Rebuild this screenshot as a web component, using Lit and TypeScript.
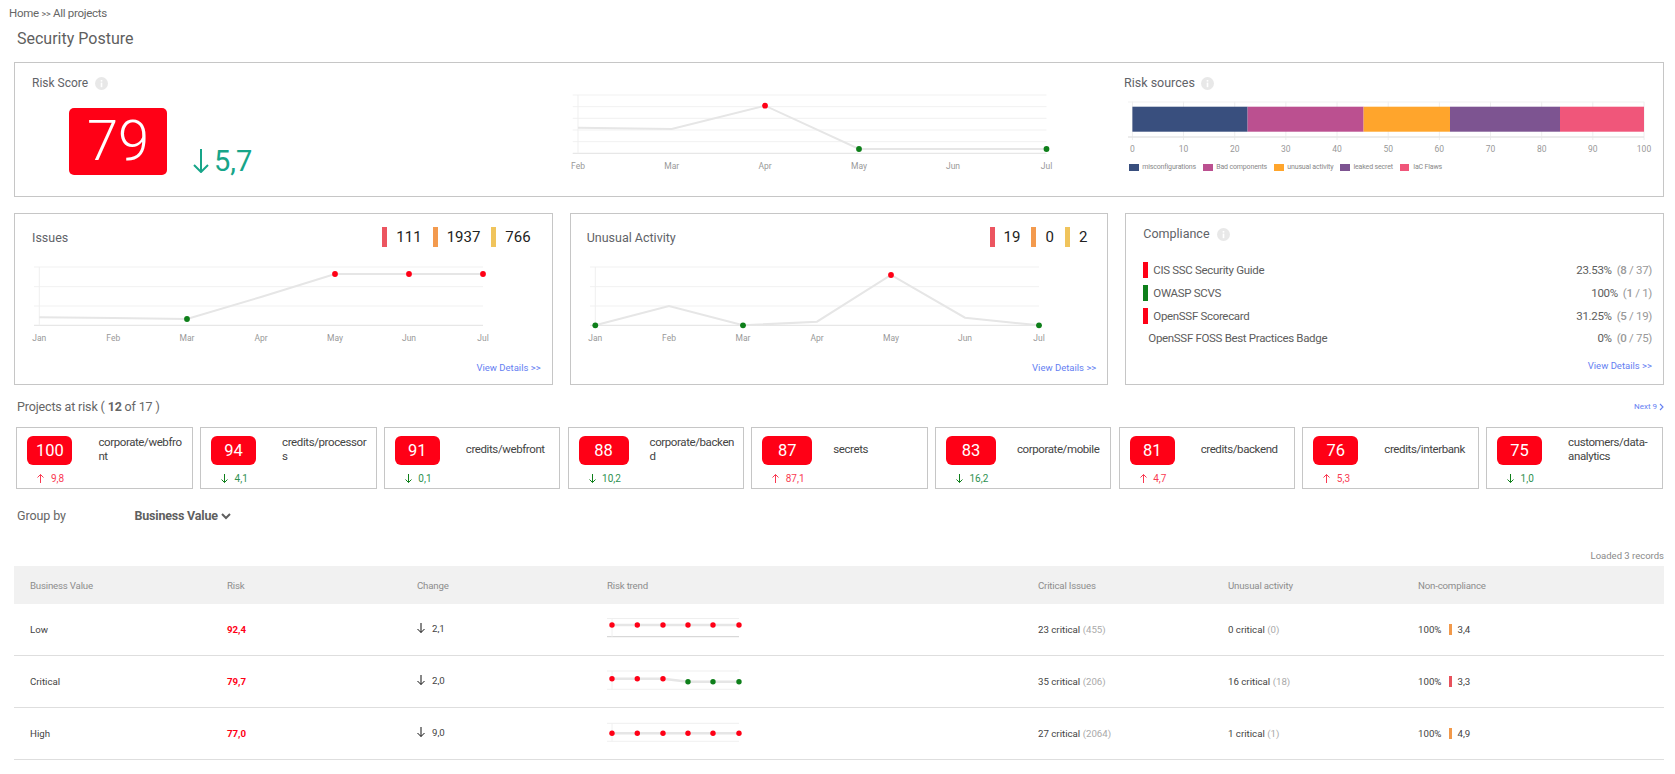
import { LitElement, html, css, svg } from "lit";
import { customElement } from "lit/decorators.js";

const RED = "#ff0016";
const GREEN = "#0e7f1a";

type Pt = [number, number, string?];

function lineChart(o: {
  w: number; h: number; gridL: number; gridR: number; axisX: number; grid: number[];
  pts: Pt[]; labels: string[]; labelY: number; fs: number;
}) {
  const last = o.grid[o.grid.length - 1];
  const poly = o.pts.map((p) => `${p[0]},${p[1]}`).join(" ");
  return html`<svg class="chart" width=${o.w} height=${o.h} viewBox="0 0 ${o.w} ${o.h}">
    ${o.grid.map((y, i) => svg`<line x1=${o.gridL} x2=${o.gridR} y1=${y} y2=${y} stroke=${i === o.grid.length - 1 ? "#e2e2e2" : "#f1f1f1"} stroke-width="1"></line>`)}
    <line x1=${o.axisX} x2=${o.axisX} y1=${o.grid[0]} y2=${last} stroke="#efefef" stroke-width="1"></line>
    <polyline points=${poly} fill="none" stroke="#e6e6e6" stroke-width="2"></polyline>
    ${o.pts.filter((p) => p[2]).map((p) => svg`<circle cx=${p[0]} cy=${p[1]} r="2.9" fill=${p[2]!}></circle>`)}
    ${o.labels.map((l, i) => svg`<text x=${o.pts[i][0]} y=${o.labelY} text-anchor="middle" font-size=${o.fs} fill="#999" font-family="Roboto, sans-serif">${l}</text>`)}
  </svg>`;
}

function arrow(dir: "up" | "down", w: number, h: number, color: string, sw: number) {
  const m = w / 2;
  const head = w / 2 - sw / 2;
  const d = dir === "down"
    ? `M${m} 0V${h - sw / 2}M${m - head} ${h - head - sw / 2}L${m} ${h - sw / 2}L${m + head} ${h - head - sw / 2}`
    : `M${m} ${h}V${sw / 2}M${m - head} ${head + sw / 2}L${m} ${sw / 2}L${m + head} ${head + sw / 2}`;
  return html`<svg class="arrow" width=${w} height=${h} viewBox="0 0 ${w} ${h}"><path d=${d} fill="none" stroke=${color} stroke-width=${sw}></path></svg>`;
}

const info = html`<svg class="info" width="13" height="13" viewBox="0 0 13 13"><circle cx="6.5" cy="6.5" r="6.5" fill="#e8e8e8"></circle><rect x="5.7" y="5.6" width="1.6" height="4.6" fill="#fff"></rect><rect x="5.7" y="3" width="1.6" height="1.6" fill="#fff"></rect></svg>`;

const projects = [
  { s: 100, n: "corporate/webfront", d: "up", v: "9,8", wide: false },
  { s: 94, n: "credits/processors", d: "down", v: "4,1", wide: false },
  { s: 91, n: "credits/webfront", d: "down", v: "0,1", wide: false },
  { s: 88, n: "corporate/backend", d: "down", v: "10,2", wide: true },
  { s: 87, n: "secrets", d: "up", v: "87,1", wide: true },
  { s: 83, n: "corporate/mobile", d: "down", v: "16,2", wide: true },
  { s: 81, n: "credits/backend", d: "up", v: "4,7", wide: false },
  { s: 76, n: "credits/interbank", d: "up", v: "5,3", wide: false },
  { s: 75, n: "customers/data-analytics", d: "down", v: "1,0", wide: false },
];

const compliance = [
  { c: "red", n: "CIS SSC Security Guide", p: "23.53%", a: "8", b: "37" },
  { c: "green", n: "OWASP SCVS", p: "100%", a: "1", b: "1" },
  { c: "red", n: "OpenSSF Scorecard", p: "31.25%", a: "5", b: "19" },
  { c: "", n: "OpenSSF FOSS Best Practices Badge", p: "0%", a: "0", b: "75" },
];

const sparkX = [5, 30.3, 56, 81, 106, 132];
const rows = [
  { name: "Low", risk: "92,4", ch: "2,1", top: 0.5, bottom: 18.7, dark: true, ys: [7, 7, 7, 7, 7, 7], cs: "rrrrrr", ci: "23 critical", cn: "(455)", ui: "0 critical", un: "(0)", bar: "orange", nc: "3,4" },
  { name: "Critical", risk: "79,7", ch: "2,0", top: 1, bottom: 19.3, dark: false, ys: [8.7, 8.7, 8.7, 11.7, 11.7, 11.7], cs: "rrrggg", ci: "35 critical", cn: "(206)", ui: "16 critical", un: "(18)", bar: "red", nc: "3,3" },
  { name: "High", risk: "77,0", ch: "9,0", top: 1.3, bottom: 19.3, dark: false, ys: [11.3, 11.3, 11.3, 11.3, 11.3, 11.3], cs: "rrrrrr", ci: "27 critical", cn: "(2064)", ui: "1 critical", un: "(1)", bar: "orange", nc: "4,9" },
];

const segs = [
  { x: 1132.4, e: 1247.6, c: "#394f7e" },
  { x: 1247.6, e: 1363.6, c: "#bb5090" },
  { x: 1363.6, e: 1450, c: "#ffa52c" },
  { x: 1450, e: 1560, c: "#7d5491" },
  { x: 1560, e: 1644, c: "#f0567a" },
];
const legend = [
  { n: "misconfigurations", c: "#394f7e" },
  { n: "Bad components", c: "#bb5090" },
  { n: "unusual activity", c: "#ffa52c" },
  { n: "leaked secret", c: "#7d5491" },
  { n: "IaC Flaws", c: "#f0567a" },
];

function riskBar() {
  const ox = 1120, oy = 96;
  const ticks = Array.from({ length: 11 }, (_, i) => i * 10);
  const tx = (t: number) => 1132.4 - ox + (t / 100) * 511.6;
  return html`<svg class="chart" width="535" height="60" viewBox="0 0 535 60">
    ${ticks.map((t) => svg`<line x1=${tx(t)} x2=${tx(t)} y1=${101.7 - oy} y2=${140 - oy} stroke="#eeeeee"></line>`)}
    <line x1="8" x2=${tx(100)} y1=${102 - oy} y2=${102 - oy} stroke="#f1f1f1"></line>
    <line x1="8" x2=${tx(100)} y1=${137 - oy} y2=${137 - oy} stroke="#e6e6e6" stroke-width="1.5"></line>
    ${segs.map((s) => svg`<rect x=${s.x - ox} y=${106.7 - oy} width=${s.e - s.x} height="25" fill=${s.c}></rect>`)}
    ${ticks.map((t) => svg`<text x=${tx(t)} y=${151.5 - oy} text-anchor="middle" font-size="8.5" fill="#999" font-family="Roboto, sans-serif">${t}</text>`)}
  </svg>`;
}

function spark(r: (typeof rows)[number]) {
  return html`<svg class="chart" width="136" height="24" viewBox="0 0 136 24">
    <line x1="0" x2="132" y1=${r.top} y2=${r.top} stroke="#efefef"></line>
    <line x1="0" x2="132" y1=${r.bottom} y2=${r.bottom} stroke=${r.dark ? "#cfcfcf" : "#f1f1f1"} stroke-width="1"></line>
    <line x1="5" x2="5" y1=${r.top} y2=${r.bottom} stroke="#f0f0f0"></line>
    <polyline points=${sparkX.map((x, i) => `${x},${r.ys[i]}`).join(" ")} fill="none" stroke="#e6e6e6" stroke-width="2.4"></polyline>
    ${sparkX.map((x, i) => svg`<circle cx=${x} cy=${r.ys[i]} r="2.7" fill=${r.cs[i] === "r" ? RED : GREEN}></circle>`)}
  </svg>`;
}

const months = ["Jan", "Feb", "Mar", "Apr", "May", "Jun", "Jul"];
const grid4 = [5, 24.7, 44, 63.3];

@customElement("app-root")
export class AppRoot extends LitElement {
  static styles = css`
    :host { display: block; font-family: Roboto, sans-serif; color: #555; background: #fff; width: 1675px; height: 774px; overflow: hidden; }
    svg { display: block; flex: none; }
    .page { padding: 0 11px 0 14px; }
    .crumb { height: 14px; padding: 6px 0 0 0; margin-left: -5px; font-size: 11.5px; letter-spacing: -0.27px; line-height: 14px; color: #666; }
    .crumb small { font-size: 9px; line-height: 0; }
    .heading { margin: 9px 0 0 3px; font-size: 16px; line-height: 20px; color: #5f5f5f; font-weight: 400; }
    .card { border: 1px solid #c6c6c6; box-sizing: border-box; background: #fff; }
    .top { margin-top: 13px; height: 135px; display: flex; }
    .top-left { width: 540px; flex: none; }
    .title { display: flex; align-items: center; gap: 7px; font-size: 12.5px; line-height: 14px; color: #5f6368; }
    .metric-head .title { margin-top: 1px; }
    .top-left .title { margin: 13px 0 0 17px; font-size: 12px; }
    .score-row { display: flex; align-items: flex-start; margin: 18px 0 0 54px; }
    .score { width: 98px; height: 67px; border-radius: 5px; background: #ff0016; color: #fff; font-size: 56px; font-weight: 300; display: flex; align-items: center; justify-content: center; line-height: 67px; }
    .delta { display: flex; align-items: center; gap: 5px; margin: 41px 0 0 26px; font-size: 29px; line-height: 24px; font-weight: 400; color: #17a589; }
    .top-right { flex: 1; }
    .top-right .title { margin: 13px 0 0 54px; gap: 6px; }
    .top-right .chart { margin: 6px 0 0 50px; }
    .legend { display: flex; margin: 6px 0 0 59px; font-size: 7px; letter-spacing: -0.15px; line-height: 10px; color: #888; }
    .legend span { display: flex; align-items: center; gap: 3.7px; margin-right: 7px; }
    .legend i { display: block; width: 9.5px; height: 7px; }
    .cols { display: grid; grid-template-columns: repeat(3, 1fr); gap: 17px; margin-top: 16px; }
    .metric { height: 172px; }
    .metric-head { display: flex; justify-content: space-between; align-items: center; height: 20px; padding: 13px 21px 0 17px; }
    .metric-head.second { padding: 13px 20px 0 16px; }
    .stats { display: flex; align-items: center; font-size: 15px; line-height: 20px; color: #222; }
    .stats b { display: block; width: 5px; height: 20px; margin: 0 9px 0 11px; }
    .s-r { background: #ec5560; }
    .s-o { background: #f39a4e; }
    .s-y { background: #f0c45c; }
    .metric .chart { margin: 15px 0 0 15px; }
    .details { margin-top: 15px; padding-right: 11px; text-align: right; font-size: 9.5px; line-height: 12px; color: #6580f2; }
    .comp-title { margin: 12px 0 0 17px; line-height: 16px; }
    .comp-list { margin: 19.5px 11px 0 17px; display: flex; flex-direction: column; gap: 7px; font-size: 11.5px; letter-spacing: -0.32px; color: #5d5d5d; }
    .comp-row { display: flex; align-items: center; min-height: 14px; }
    .comp-row b { display: block; width: 5px; height: 16px; }
    .b-red { background: #ff0016; }
    .b-green { background: #0e7f1a; }
    .comp-name { margin-left: 5px; flex: 1; }
    .comp-row em { font-style: normal; color: #999; margin-left: 5px; }
    .comp-row em strong { font-weight: 500; }
    .comp-details { margin-top: 15px; }
    .proj-head { display: flex; justify-content: space-between; align-items: center; margin: 14px 0 0 3px; font-size: 12.5px; line-height: 16px; color: #666; }
    .proj-head > div:first-child { letter-spacing: -0.15px; }
    .proj-head strong { font-weight: 700; }
    .next { display: flex; align-items: center; gap: 2px; font-size: 8px; color: #6580f2; }
    .projects { display: grid; grid-template-columns: repeat(9, 1fr); gap: 7.3px; margin: 11.5px 1.5px 0 2.4px; }
    .proj { height: 62px; }
    .proj-main { display: grid; grid-template-columns: 81px 1fr; height: 29px; margin-top: 8px; align-items: center; }
    .badge { margin-left: 10px; width: 45px; height: 29px; border-radius: 6px; background: #ff0016; color: #fff; font-size: 16.5px; display: flex; align-items: center; justify-content: center; }
    .badge.wide { width: 50px; }
    .pname { width: 87px; font-size: 11.5px; letter-spacing: -0.4px; line-height: 14px; color: #444; word-break: break-all; margin-top: -2px; }
    .pdelta { display: flex; align-items: center; gap: 6.5px; margin: 8px 0 0 20px; font-size: 10px; line-height: 11px; }
    .up { color: #f93a52; }
    .dn { color: #2e9150; }
    .group { display: flex; align-items: center; margin: 19.5px 0 0 3px; font-size: 12.5px; line-height: 16px; color: #666; }
    .group span { width: 117.5px; letter-spacing: -0.1px; }
    .group strong { font-weight: 700; color: #5f5f5f; letter-spacing: -0.2px; }
    .group svg { margin-left: 3px; }
    .loaded { margin-top: 26px; text-align: right; font-size: 9.5px; line-height: 12px; color: #8a8a8a; }
    .thead, .trow { display: grid; grid-template-columns: 197px 190px 190px 431px 190px 190px 1fr; align-items: center; font-size: 9.7px; }
    .thead > div, .trow > div { padding-left: 16px; }
    .thead { margin-top: 4px; height: 38px; letter-spacing: -0.2px; background: #f1f1f1; color: #8d8d8d; }
    .trow { height: 52px; box-sizing: border-box; border-bottom: 1px solid #dedede; color: #444; }
    .risk { color: #ff0016; font-weight: 700; }
    .change { display: flex; align-items: center; gap: 7px; padding-bottom: 3px; }
    .muted { color: #aaa; }
    .nc { display: flex; align-items: center; }
    .nc b { display: block; width: 3px; height: 11px; margin: 0 5px 0 8px; }
    .nc-orange { background: #f2994a; }
    .nc-red { background: #e8525c; }
  `;

  render() {
    return html`<div class="page">
      <div class="crumb">Home <small>&gt;&gt;</small> All projects</div>
      <h1 class="heading">Security Posture</h1>

      <section class="card top">
        <div class="top-left">
          <div class="title">Risk Score ${info}</div>
          <div class="score-row">
            <div class="score">79</div>
            <div class="delta">${arrow("down", 16, 24, "#17a589", 2)}5,7</div>
          </div>
        </div>
        ${lineChart({
          w: 515, h: 132, gridL: 17.7, gridR: 491.5, axisX: 23,
          grid: [32, 43.7, 55.3, 67, 78.7, 90.3],
          pts: [[23, 64.7], [116.7, 66], [210, 42.7, RED], [304, 86, GREEN], [398, 86], [491.5, 86, GREEN]],
          labels: ["Feb", "Mar", "Apr", "May", "Jun", "Jul"], labelY: 105.7, fs: 8.5,
        })}
        <div class="top-right">
          <div class="title">Risk sources ${info}</div>
          ${riskBar()}
          <div class="legend">${legend.map((l) => html`<span><i style="background:${l.c}"></i>${l.n}</span>`)}</div>
        </div>
      </section>

      <div class="cols">
        <section class="card metric">
          <div class="metric-head">
            <div class="title">Issues</div>
            <div class="stats"><b class="s-r"></b>111<b class="s-o"></b>1937<b class="s-y"></b>766</div>
          </div>
          ${lineChart({
            w: 500, h: 85, gridL: 4, gridR: 453, axisX: 9.3, grid: grid4,
            pts: [[9.3, 55.3], [83.3, 56], [157, 57, GREEN], [231, 35], [305, 12, RED], [379, 12, RED], [453, 12, RED]],
            labels: months, labelY: 78.5, fs: 8.5,
          })}
          <div class="details">View Details &gt;&gt;</div>
        </section>
        <section class="card metric">
          <div class="metric-head second">
            <div class="title">Unusual Activity</div>
            <div class="stats"><b class="s-r"></b>19<b class="s-o"></b>0<b class="s-y"></b>2</div>
          </div>
          ${lineChart({
            w: 500, h: 85, gridL: 4, gridR: 453, axisX: 9.3, grid: grid4,
            pts: [[9.3, 63.3, GREEN], [83, 44], [157, 63.3, GREEN], [231, 59.7], [305, 13, RED], [379, 55.7], [453, 63.3, GREEN]],
            labels: months, labelY: 78.5, fs: 8.5,
          })}
          <div class="details">View Details &gt;&gt;</div>
        </section>
        <section class="card metric">
          <div class="title comp-title">Compliance ${info}</div>
          <div class="comp-list">
            ${compliance.map((c) => html`<div class="comp-row">
              ${c.c ? html`<b class=${c.c === "red" ? "b-red" : "b-green"}></b>` : ""}
              <span class="comp-name">${c.n}</span>
              <span>${c.p}</span>
              <em>(<strong>${c.a}</strong> / ${c.b})</em>
            </div>`)}
          </div>
          <div class="details comp-details">View Details &gt;&gt;</div>
        </section>
      </div>

      <div class="proj-head">
        <div>Projects at risk ( <strong>12</strong> of 17 )</div>
        <div class="next">Next 9 <svg width="5" height="8" viewBox="0 0 5 8"><path d="M1 1l3 3-3 3" fill="none" stroke="#6580f2" stroke-width="1.1"></path></svg></div>
      </div>
      <div class="projects">
        ${projects.map((p) => html`<div class="card proj">
          <div class="proj-main">
            <div class="badge ${p.wide ? "wide" : ""}">${p.s}</div>
            <div class="pname">${p.n.includes("data-") ? html`customers/data-<br />analytics` : p.n}</div>
          </div>
          <div class="pdelta ${p.d === "up" ? "up" : "dn"}">
            ${arrow(p.d as "up" | "down", 7, 9, p.d === "up" ? "#f93a52" : GREEN, 1)}${p.v}
          </div>
        </div>`)}
      </div>

      <div class="group">
        <span>Group by</span><strong>Business Value</strong>
        <svg width="10" height="7" viewBox="0 0 10 7"><path d="M1 1l4 4 4-4" fill="none" stroke="#5f5f5f" stroke-width="2"></path></svg>
      </div>

      <div class="loaded">Loaded 3 records</div>
      <div class="thead">
        <div>Business Value</div><div>Risk</div><div>Change</div><div>Risk trend</div><div>Critical Issues</div><div>Unusual activity</div><div>Non-compliance</div>
      </div>
      ${rows.map((r) => html`<div class="trow">
        <div>${r.name}</div>
        <div class="risk">${r.risk}</div>
        <div class="change">${arrow("down", 8, 10, "#111", 1)}${r.ch}</div>
        <div>${spark(r)}</div>
        <div>${r.ci} <span class="muted">${r.cn}</span></div>
        <div>${r.ui} <span class="muted">${r.un}</span></div>
        <div class="nc">100%<b class=${r.bar === "red" ? "nc-red" : "nc-orange"}></b>${r.nc}</div>
      </div>`)}
    </div>`;
  }
}
